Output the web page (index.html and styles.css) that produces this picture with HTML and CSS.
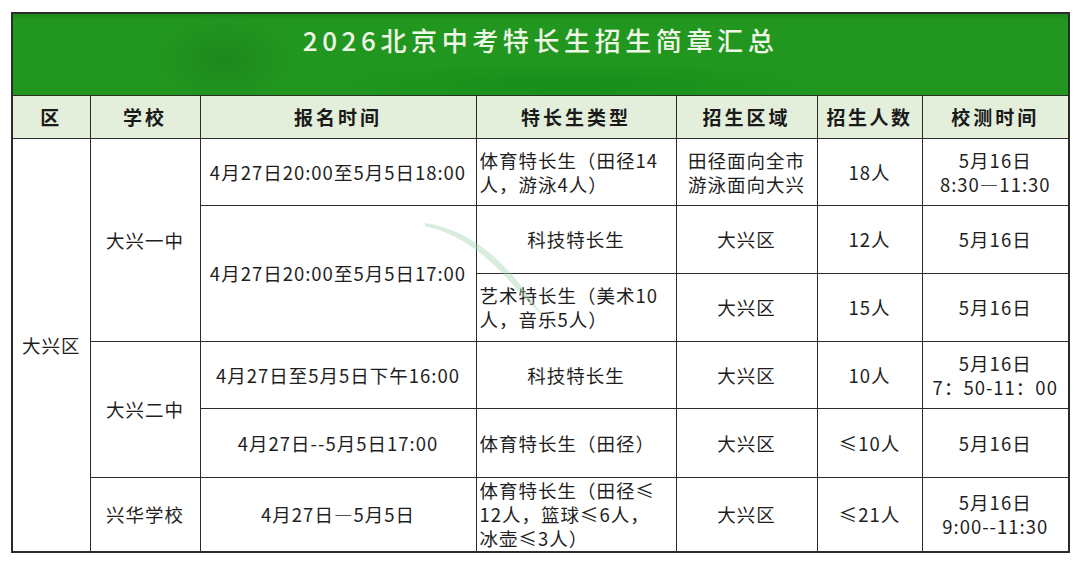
FILE: index.html
```html
<!DOCTYPE html>
<html lang="zh-CN">
<head>
<meta charset="utf-8">
<title>2026北京中考特长生招生简章汇总</title>
<link rel="stylesheet" href="styles.css">
</head>
<body>
<div class="page">
<table class="sheet">
  <colgroup>
    <col class="c-qu"><col class="c-school"><col class="c-time"><col class="c-type"><col class="c-area"><col class="c-num"><col class="c-test">
  </colgroup>
  <tr class="r-title"><td colspan="7" class="title">2026北京中考特长生招生简章汇总</td></tr>
  <tr class="r-head">
    <th>区</th><th>学校</th><th>报名时间</th><th>特长生类型</th><th>招生区域</th><th class="tight">招生人数</th><th>校测时间</th>
  </tr>
  <tr class="r1">
    <td rowspan="6">大兴区</td>
    <td rowspan="3">大兴一中</td>
    <td>4月27日20:00至5月5日18:00</td>
    <td class="left">体育特长生（田径14<br>人，游泳4人）</td>
    <td>田径面向全市<br>游泳面向大兴</td>
    <td>18人</td>
    <td>5月16日<br>8:30—11:30</td>
  </tr>
  <tr class="r2">
    <td rowspan="2">4月27日20:00至5月5日17:00</td>
    <td>科技特长生</td>
    <td>大兴区</td>
    <td>12人</td>
    <td>5月16日</td>
  </tr>
  <tr class="r3">
    <td class="left">艺术特长生（美术10<br>人，音乐5人）</td>
    <td>大兴区</td>
    <td>15人</td>
    <td>5月16日</td>
  </tr>
  <tr class="r4">
    <td rowspan="2">大兴二中</td>
    <td>4月27日至5月5日下午16:00</td>
    <td>科技特长生</td>
    <td>大兴区</td>
    <td>10人</td>
    <td>5月16日<br>7：50-11：00</td>
  </tr>
  <tr class="r5">
    <td>4月27日--5月5日17:00</td>
    <td class="left">体育特长生（田径）</td>
    <td>大兴区</td>
    <td>≤10人</td>
    <td>5月16日</td>
  </tr>
  <tr class="r6">
    <td>兴华学校</td>
    <td>4月27日—5月5日</td>
    <td class="left">体育特长生（田径≤<br>12人，篮球≤6人，<br>冰壶≤3人）</td>
    <td>大兴区</td>
    <td>≤21人</td>
    <td>5月16日<br>9:00--11:30</td>
  </tr>
</table>
<svg class="stroke" width="140" height="110" viewBox="0 0 140 110" aria-hidden="true">
  <path d="M3 9 C 40 14, 72 38, 96 68 C 108 84, 116 96, 126 106 C 112 94, 100 82, 90 70 C 66 42, 38 20, 3 12 Z" fill="#9fd3a8" opacity="0.4"/>
</svg>
</div>
</body>
</html>
```
FILE: styles.css
```css
html, body {
  margin: 0;
  padding: 0;
  background: #ffffff;
}

.page {
  position: relative;
  width: 1080px;
  height: 563px;
  padding: 12px 0 0 11px;
  box-sizing: border-box;
  overflow: hidden;
}

.sheet {
  width: 1057px;
  table-layout: fixed;
  border-collapse: collapse;
  border: 2px solid #2b2b2b;
  font-family: "Noto Sans CJK SC", "Noto Sans", sans-serif;
  font-size: 18.5px;
  line-height: 24px;
  color: #1e1e1e;
  letter-spacing: 1px;
}

.c-qu { width: 78px; }
.c-school { width: 110px; }
.c-time { width: 276px; }
.c-type { width: 200px; }
.c-area { width: 141px; }
.c-num { width: 105px; }
.c-test { width: 147px; }

.sheet td, .sheet th {
  border: 1.5px solid #2b2b2b;
  text-align: center;
  vertical-align: middle;
  padding: 0 2px;
  white-space: nowrap;
}

.sheet td.left {
  text-align: left;
  padding-left: 3px;
}

.r-title { height: 82px; }
.sheet td.title {
  vertical-align: top;
  padding-top: 9px;
  color: #eef6e6;
  font-size: 26px;
  line-height: 34px;
  letter-spacing: 4.6px;
  font-weight: 500;
  background-color: #21971f;
  background-image:
    radial-gradient(ellipse 70px 45px at 210px 45px, rgba(20, 110, 25, 0.35), rgba(20, 110, 25, 0) 100%),
    radial-gradient(ellipse 260px 22px at 560px 70px, rgba(12, 130, 20, 0.45), rgba(12, 130, 20, 0) 100%),
    linear-gradient(#1c8a1c 0, #21971f 6px, #21971f 100%);
}

.r-head { height: 43px; }
.sheet th {
  background: #e3eedb;
  font-weight: 700;
  font-size: 19px;
  letter-spacing: 3px;
  color: #1a1a1a;
}
.sheet th.tight { letter-spacing: 2.5px; }

.r1 { height: 67px; }
.r2 { height: 68px; }
.r3 { height: 68px; }
.r4 { height: 67px; }
.r5 { height: 69px; }
.r6 { height: 75px; }

.stroke {
  position: absolute;
  left: 422px;
  top: 214px;
  pointer-events: none;
}
```
